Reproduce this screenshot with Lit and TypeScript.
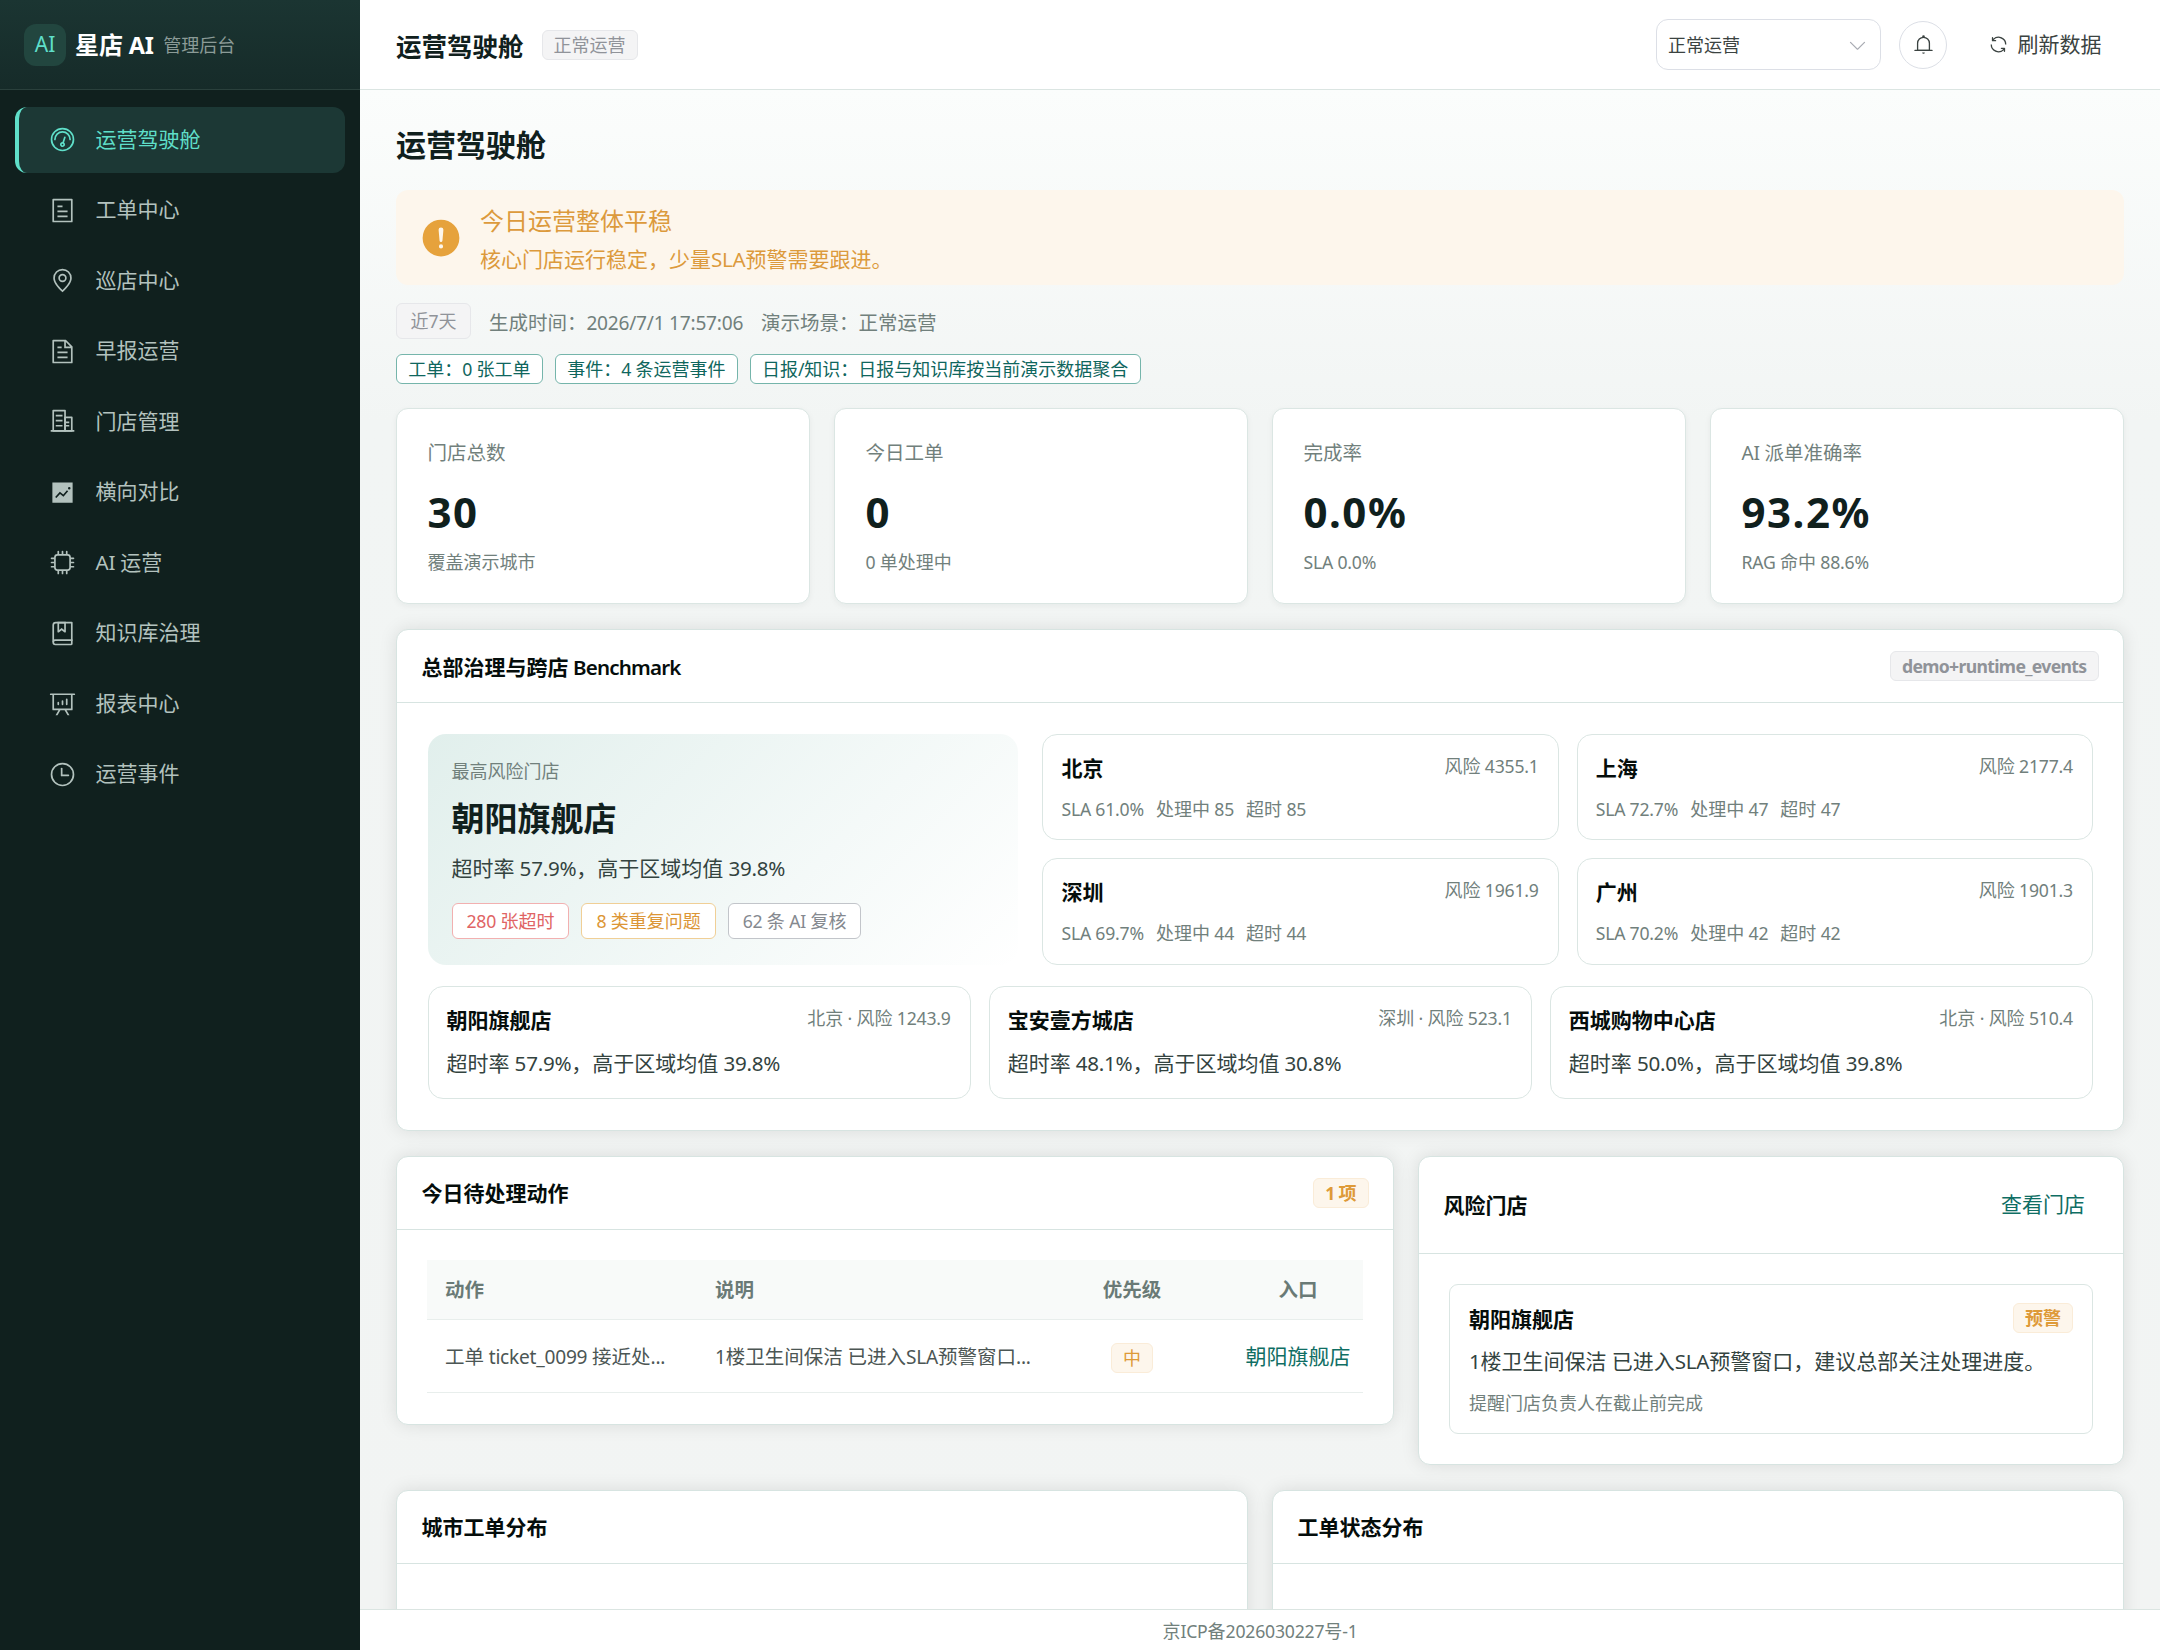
import { LitElement, html, css, svg } from "lit";
import { customElement, property } from "lit/decorators.js";

const ICONS: Record<string, string[]> = {
  odometer: [
    "M512 896a384 384 0 1 0 0-768 384 384 0 0 0 0 768m0 64a448 448 0 1 1 0-896 448 448 0 0 1 0 896",
    "M192 512a320 320 0 1 1 640 0 32 32 0 1 1-64 0 256 256 0 1 0-512 0 32 32 0 0 1-64 0",
    "M570.432 627.84A96 96 0 1 1 509.568 608l60.992-187.776A32 32 0 1 1 631.424 440l-60.992 187.776zM502.08 734.464a32 32 0 1 0 19.84-60.928 32 32 0 0 0-19.84 60.928",
  ],
  tickets: [
    "M192 128v768h640V128zm-32-64h704a32 32 0 0 1 32 32v832a32 32 0 0 1-32 32H160a32 32 0 0 1-32-32V96a32 32 0 0 1 32-32m160 448h384v64H320zm0-192h192v64H320zm0 384h384v64H320z",
  ],
  location: [
    "M800 416a288 288 0 1 0-576 0c0 118.144 94.528 272.128 288 456.576C705.472 688.128 800 534.144 800 416M512 960C277.312 746.688 160 565.312 160 416a352 352 0 0 1 704 0c0 149.312-117.312 330.688-352 544",
    "M512 512a96 96 0 1 0 0-192 96 96 0 0 0 0 192m0 64a160 160 0 1 1 0-320 160 160 0 0 1 0 320",
  ],
  document: [
    "M832 384H576V128H192v768h640zm-26.496-64L640 154.496V320zM160 64h480l256 256v608a32 32 0 0 1-32 32H160a32 32 0 0 1-32-32V96a32 32 0 0 1 32-32m160 448h384v64H320zm0-192h160v64H320zm0 384h384v64H320z",
  ],
  office: [
    "M192 128v704h384V128zm-32-64h448a32 32 0 0 1 32 32v768a32 32 0 0 1-32 32H160a32 32 0 0 1-32-32V96a32 32 0 0 1 32-32",
    "M256 256h256v64H256zm0 192h256v64H256zm0 192h256v64H256zm384-128h128v64H640zm0 128h128v64H640zM64 832h896v64H64z",
    "M640 384v448h192V384zm-32-64h256a32 32 0 0 1 32 32v512a32 32 0 0 1-32 32H608a32 32 0 0 1-32-32V352a32 32 0 0 1 32-32",
  ],
  trend: [
    "M128 896V128h768v768zm291.712-327.296 128 102.4 180.16-201.792-47.744-42.624-139.84 156.608-128-102.4-180.16 201.792 47.744 42.624 139.84-156.608zM816 352a48 48 0 1 0-96 0 48 48 0 0 0 96 0",
  ],
  cpu: [
    "M320 256a64 64 0 0 0-64 64v384a64 64 0 0 0 64 64h384a64 64 0 0 0 64-64V320a64 64 0 0 0-64-64zm0-64h384a128 128 0 0 1 128 128v384a128 128 0 0 1-128 128H320a128 128 0 0 1-128-128V320a128 128 0 0 1 128-128",
    "M512 64a32 32 0 0 1 32 32v128h-64V96a32 32 0 0 1 32-32m160 0a32 32 0 0 1 32 32v128h-64V96a32 32 0 0 1 32-32m-320 0a32 32 0 0 1 32 32v128h-64V96a32 32 0 0 1 32-32m160 896a32 32 0 0 1-32-32V800h64v128a32 32 0 0 1-32 32m160 0a32 32 0 0 1-32-32V800h64v128a32 32 0 0 1-32 32m-320 0a32 32 0 0 1-32-32V800h64v128a32 32 0 0 1-32 32M64 512a32 32 0 0 1 32-32h128v64H96a32 32 0 0 1-32-32m0-160a32 32 0 0 1 32-32h128v64H96a32 32 0 0 1-32-32m0 320a32 32 0 0 1 32-32h128v64H96a32 32 0 0 1-32-32m896-160a32 32 0 0 1-32 32H800v-64h128a32 32 0 0 1 32 32m0-160a32 32 0 0 1-32 32H800v-64h128a32 32 0 0 1 32 32m0 320a32 32 0 0 1-32 32H800v-64h128a32 32 0 0 1 32 32",
  ],
  collection: [
    "M192 736h640V128H256a64 64 0 0 0-64 64zm64-672h608a32 32 0 0 1 32 32v672a32 32 0 0 1-32 32H160l-32 57.536V192A128 128 0 0 1 256 64",
    "M240 800a48 48 0 1 0 0 96h592v-96zm0-64h656v160a64 64 0 0 1-64 64H240a112 112 0 0 1 0-224m144-608v250.88l96-76.8 96 76.8V128zm-64-64h320v381.44a32 32 0 0 1-51.968 24.96L480 384l-108.032 86.4A32 32 0 0 1 320 445.44z",
  ],
  analysis: [
    "m665.216 768 110.848 192h-73.856L591.36 768H433.024L322.176 960H248.32l110.848-192H160a32 32 0 0 1-32-32V192H64a32 32 0 0 1 0-64h896a32 32 0 1 1 0 64h-64v544a32 32 0 0 1-32 32zM832 192H192v512h640zM352 448a32 32 0 0 1 32 32v64a32 32 0 0 1-64 0v-64a32 32 0 0 1 32-32m160-64a32 32 0 0 1 32 32v128a32 32 0 0 1-64 0V416a32 32 0 0 1 32-32m160-64a32 32 0 0 1 32 32v192a32 32 0 1 1-64 0V352a32 32 0 0 1 32-32",
  ],
  clock: [
    "M512 896a384 384 0 1 0 0-768 384 384 0 0 0 0 768m0 64a448 448 0 1 1 0-896 448 448 0 0 1 0 896",
    "M480 256a32 32 0 0 1 32 32v256a32 32 0 0 1-64 0V288a32 32 0 0 1 32-32",
    "M480 512h256q32 0 32 32t-32 32H480q-32 0-32-32t32-32",
  ],
  bell: [
    "M512 64a64 64 0 0 1 64 64v64H448v-64a64 64 0 0 1 64-64",
    "M256 768h512V448a256 256 0 1 0-512 0zm256-640a320 320 0 0 1 320 320v384H192V448a320 320 0 0 1 320-320",
    "M96 768h832q32 0 32 32t-32 32H96q-32 0-32-32t32-32m352 128h128a64 64 0 0 1-128 0",
  ],
  refresh: [
    "M771.776 794.88A384 384 0 0 1 128 512h64a320 320 0 0 0 555.712 216.448H654.72a32 32 0 1 1 0-64h149.056a32 32 0 0 1 32 32v148.928a32 32 0 1 1-64 0v-50.56zM276.288 295.616h92.992a32 32 0 0 1 0 64H220.16a32 32 0 0 1-32-32V178.56a32 32 0 0 1 64 0v50.56A384 384 0 0 1 896.128 512h-64a320 320 0 0 0-555.776-216.384z",
  ],
  arrowDown: [
    "M831.872 340.864 512 652.672 192.128 340.864a30.592 30.592 0 0 0-42.752 0 29.12 29.12 0 0 0 0 41.6L489.664 714.24a32 32 0 0 0 44.672 0l340.288-331.712a29.12 29.12 0 0 0 0-41.728 30.592 30.592 0 0 0-42.752 0z",
  ],
  warning: [
    "M512 64a448 448 0 1 1 0 896 448 448 0 0 1 0-896m0 192a58.432 58.432 0 0 0-58.24 63.744l23.36 256.384a35.072 35.072 0 0 0 69.76 0l23.296-256.384A58.432 58.432 0 0 0 512 256m0 512a51.2 51.2 0 1 0 0-102.4 51.2 51.2 0 0 0 0 102.4",
  ],
};

@customElement("ui-icon")
export class UiIcon extends LitElement {
  @property() name = "";
  static styles = css`
    :host { display: inline-flex; width: 1em; height: 1em; flex: none; }
    .glyph { width: 100%; height: 100%; fill: currentColor; display: block; }
  `;
  render() {
    return html`<svg class="glyph" viewBox="0 0 1024 1024">
      ${(ICONS[this.name] ?? []).map((d) => svg`<path d=${d}></path>`)}
    </svg>`;
  }
}

/** Splits mixed text so that Latin runs get their own, slightly tighter metrics. */
const mix = (text: string) =>
  text
    .split(/([\x20-\x7e\u00b7]+)/)
    .filter((part) => part !== "")
    .map((part) => (/^[\x20-\x7e\u00b7]/.test(part) ? html`<span class="latin">${part}</span>` : part));

const MENU = [
  ["odometer", "运营驾驶舱"],
  ["tickets", "工单中心"],
  ["location", "巡店中心"],
  ["document", "早报运营"],
  ["office", "门店管理"],
  ["trend", "横向对比"],
  ["cpu", "AI 运营"],
  ["collection", "知识库治理"],
  ["analysis", "报表中心"],
  ["clock", "运营事件"],
];

const KPIS = [
  ["门店总数", "30", "覆盖演示城市"],
  ["今日工单", "0", "0 单处理中"],
  ["完成率", "0.0%", "SLA 0.0%"],
  ["AI 派单准确率", "93.2%", "RAG 命中 88.6%"],
];

const CITIES = [
  ["北京", "4355.1", "61.0%", "85"],
  ["上海", "2177.4", "72.7%", "47"],
  ["深圳", "1961.9", "69.7%", "44"],
  ["广州", "1901.3", "70.2%", "42"],
];

const STORES = [
  ["朝阳旗舰店", "北京 · 风险 1243.9", "超时率 57.9%，高于区域均值 39.8%"],
  ["宝安壹方城店", "深圳 · 风险 523.1", "超时率 48.1%，高于区域均值 30.8%"],
  ["西城购物中心店", "北京 · 风险 510.4", "超时率 50.0%，高于区域均值 39.8%"],
];

@customElement("app-root")
export class AppRoot extends LitElement {
  static styles = css`
    :host {
      display: flex;
      width: 100%;
      height: 1650px;
      overflow: hidden;
      font-family: "Noto Sans", "Noto Sans CJK SC", sans-serif;
      font-size: 21px;
      line-height: 1.4;
      color: #10201d;
      background: #f2f5f4;
    }
    * { box-sizing: border-box; }
    .latin { letter-spacing: -0.012em; font-size: 0.98em; white-space: pre; }

    .sidebar { width: 360px; flex: none; background: #10201e; display: flex; flex-direction: column; }
    .brand {
      height: 90px; flex: none; padding-left: 24px; display: flex; align-items: center;
      background: linear-gradient(180deg, #1b3532 0%, #162b29 100%);
      border-bottom: 1px solid #2a403c;
    }
    .brand-mark {
      width: 42px; height: 42px; border-radius: 12px; background: #22463f; color: #5fdfc9;
      display: flex; align-items: center; justify-content: center; margin-right: 9px;
    }
    .brand-name { font-size: 24px; font-weight: 700; color: #fff; line-height: 34px; margin-right: 9.5px; white-space: nowrap; }
    .brand-sub { font-size: 18px; color: #8b9b97; line-height: 26px; padding-top: 1px; }
    .menu { display: flex; flex-direction: column; gap: 4.5px; padding: 16.5px 15px; }
    .menu-item {
      height: 66px; display: flex; align-items: center; padding-left: 30px; gap: 19.5px;
      border-left: 4.5px solid transparent; border-radius: 12px; color: #b3c2be; font-size: 21px;
    }
    .menu-item.active { background: #1c3835; color: #5fdfc9; border-left-color: #5fdfc9; }
    .menu-icon { font-size: 27px; }

    .main { flex: 1; min-width: 0; display: flex; flex-direction: column; }
    .topbar {
      height: 90px; flex: none; background: #fff; border-bottom: 1px solid #dbe5e2;
      display: flex; align-items: center; padding: 0 36px;
    }
    .topbar-title { font-size: 25.5px; font-weight: 700; margin-right: 18px; line-height: 36px; padding-top: 2px; }
    .spacer { flex: 1; }
    .select {
      width: 225px; height: 51px; border: 1px solid #dcdfe6; border-radius: 12px; padding: 2px 12px 0 11px;
      display: flex; align-items: center; justify-content: space-between; font-size: 18px; color: #3b4341;
      margin-right: 18px;
    }
    .select-arrow { font-size: 21px; color: #a8abb2; }
    .round-btn {
      width: 48px; height: 48px; border: 1px solid #dcdfe6; border-radius: 50%;
      display: flex; align-items: center; justify-content: center; font-size: 21px; color: #3b4341;
    }
    .text-btn { display: flex; align-items: center; gap: 9px; padding: 0 22.5px; margin-left: 18px; color: #3b4341; }

    .tag {
      height: 30px; padding: 0 11px; border: 1px solid; border-radius: 6px; font-size: 18px; line-height: 28px;
      display: inline-flex; align-items: center; white-space: nowrap; flex: none;
    }
    .tag.info { background: #f4f4f5; border-color: #e6e7ea; color: #909399; }
    .tag.warn { background: #fdf6ec; border-color: #faecd8; color: #de9a38; }
    .tag.tall { height: 36px; padding: 0 13.5px; }
    .tag.teal { background: #fff; border-color: #75b5ab; color: #0f665d; }
    .tag.danger-line { background: #fff; border-color: #f2b0b0; color: #e06464; }
    .tag.warn-line { background: #fff; border-color: #f0cf96; color: #dc9636; }
    .tag.info-line { background: #fff; border-color: #c2c5ca; color: #85898f; }
    .tag.strong { font-weight: 700; }
    .tag.strong .latin { letter-spacing: -0.038em; }

    .content {
      flex: 1; min-height: 0; overflow: hidden; padding: 35px 36px 0; display: flex; flex-direction: column;
      background: linear-gradient(180deg, #fbfdfc 0, #f2f5f4 330px, #f2f4f3 100%);
    }
    .content > * { flex: none; }
    .page-title { margin: 0; height: 40px; line-height: 40px; font-size: 30px; font-weight: 700; }
    .alert {
      margin-top: 25px; height: 95px; border-radius: 12px; background: #fdf6ec; color: #dc9a3c;
      display: flex; align-items: center; padding: 0 24px; gap: 18px;
    }
    .alert-icon { font-size: 42px; color: #e6a23c; }
    .alert-title { font-size: 24px; line-height: 36px; padding-top: 2px; }
    .alert-text { font-size: 21px; line-height: 32px; margin-top: 4px; }
    .meta { margin-top: 18px; height: 36px; display: flex; align-items: center; gap: 18px; font-size: 19.5px; color: #71807c; }
    .meta-text { padding-top: 3px; }
    .chips { margin-top: 15px; display: flex; gap: 12px; }
    .chips .tag { padding: 0 11.3px; }

    .kpis { margin-top: 24px; display: grid; grid-template-columns: repeat(4, 1fr); gap: 24px; }
    .kpi {
      height: 196px; background: #fff; border: 1px solid #dbe6e3; border-radius: 12px; padding: 29px 30px 0 30.5px;
      box-shadow: 0 2px 6px rgba(16, 40, 36, 0.05);
    }
    .kpi-label { font-size: 19.5px; line-height: 30px; color: #71807c; }
    .kpi-value { font-size: 42px; line-height: 60px; font-weight: 700; margin-top: 14px; }
    .kpi-value .latin { letter-spacing: 0.036em; font-size: 1em; }
    .kpi-sub { font-size: 18px; line-height: 28px; color: #71807c; margin-top: 6px; }

    .card {
      background: #fff; border: 1px solid #d7e4e1; border-radius: 12px;
      box-shadow: 0 0 18px rgba(0, 0, 0, 0.1);
    }
    .card-head {
      height: 73px; border-bottom: 1px solid #d7e4e1; padding: 0 24.5px;
      display: flex; align-items: center; justify-content: space-between;
    }
    .card-title { font-weight: 700; font-size: 21px; color: #050d0b; line-height: 30px; }
    .card-title .latin { font-weight: 600; letter-spacing: -0.04em; }
    .bench { margin-top: 25px; height: 502px; }
    .bench .card-title { padding-top: 1px; }
    .bench-body { padding: 30.5px 30px 30px 30.5px; }
    .bench-top { display: grid; grid-template-columns: 0.9fr 1.6fr; gap: 24px; height: 231px; }
    .hero {
      border-radius: 18px; padding: 23px 24px; display: flex; flex-direction: column; align-items: flex-start;
      background: linear-gradient(135deg, #e1efec 0%, #ffffff 100%);
    }
    .hero-label { font-size: 18px; line-height: 28px; color: #71807c; }
    .hero-name { font-size: 33px; line-height: 48px; font-weight: 700; margin-top: 10px; }
    .body-text { font-size: 21px; line-height: 32px; color: #33433f; }
    .hero .body-text { margin-top: 9px; }
    .hero-tags { display: flex; gap: 12px; margin-top: 19px; }
    .hero-tags .tag { padding: 0 14px; }
    .cities { display: grid; grid-template-columns: 1fr 1fr; grid-template-rows: 1fr 1fr; gap: 18px; }
    .mini { border: 1px solid #dbe6e3; border-radius: 15px; padding: 15px 19px 15px 18px; background: #fff; }
    .mini-head { display: flex; justify-content: space-between; align-items: flex-start; }
    .mini-name { font-weight: 700; font-size: 21px; line-height: 36px; height: 36px; color: #050d0b; }
    .mini-risk { font-size: 18px; line-height: 32px; color: #71807c; }
    .mini-stats { display: flex; gap: 12px; font-size: 18px; line-height: 28px; margin-top: 9px; color: #71807c; }
    .stores { display: grid; grid-template-columns: repeat(3, 1fr); gap: 18px; margin-top: 21px; }
    .stores .mini { height: 113px; }
    .stores .body-text { margin-top: 9px; }

    .row { display: flex; gap: 24px; align-items: flex-start; margin-top: 25px; }
    .todo { width: 998px; height: 269px; }
    .risk { flex: 1; height: 309px; }
    .table { margin: 30px 30px 0; }
    .tr { display: grid; grid-template-columns: 270px 334px 202px 1fr; align-items: center; font-size: 19.5px; }
    .tr > div { padding-left: 18px; white-space: nowrap; }
    .tr > .center { padding: 0; display: flex; justify-content: center; }
    .th { height: 60px; background: #f8faf9; border-bottom: 1px solid #e8eeec; font-weight: 600; color: #6a7a76; }
    .td { height: 73px; border-bottom: 1px solid #e8eeec; color: #4c5654; padding-top: 2px; }
    .td .tag { margin-top: 2px; }
    .link { color: #0f6e64; font-size: 21px; line-height: 30px; margin-top: -3px; }
    .risk .card-head { height: 97px; }
    .risk .link { padding-right: 13.5px; }
    .risk-item {
      margin: 30px; height: 150px; border: 1px solid #dbe6e3; border-radius: 9px; padding: 18px 19px 0 19px;
    }
    .risk-item .mini-head { height: 33px; }
    .risk-item .mini-name { margin-top: -2px; }
    .risk-item .body-text { margin-top: 9px; }
    .risk-sub { font-size: 18px; line-height: 28px; margin-top: 12px; color: #71807c; }
    .charts { display: grid; grid-template-columns: 1fr 1fr; gap: 24px; margin-top: 25px; }
    .chart { height: 420px; }
    .footer {
      height: 41px; flex: none; background: #fff; border-top: 1px solid #dbe5e2; color: #71807c; font-size: 18px;
      display: flex; align-items: center; justify-content: center; padding-top: 3px;
    }
  `;

  private renderSidebar() {
    return html`<aside class="sidebar">
      <div class="brand">
        <div class="brand-mark">AI</div>
        <div class="brand-name">${mix("星店 AI")}</div>
        <div class="brand-sub">管理后台</div>
      </div>
      <nav class="menu">
        ${MENU.map(
          ([icon, label], i) => html`<div class="menu-item ${i === 0 ? "active" : ""}">
            <ui-icon class="menu-icon" name=${icon}></ui-icon><span>${mix(label)}</span>
          </div>`
        )}
      </nav>
    </aside>`;
  }

  private renderTopbar() {
    return html`<header class="topbar">
      <div class="topbar-title">运营驾驶舱</div>
      <span class="tag info">正常运营</span>
      <div class="spacer"></div>
      <div class="select"><span>正常运营</span><ui-icon class="select-arrow" name="arrowDown"></ui-icon></div>
      <div class="round-btn"><ui-icon name="bell"></ui-icon></div>
      <div class="text-btn"><ui-icon name="refresh"></ui-icon><span>刷新数据</span></div>
    </header>`;
  }

  private renderBenchmark() {
    return html`<section class="card bench">
      <div class="card-head">
        <div class="card-title">${mix("总部治理与跨店 Benchmark")}</div>
        <span class="tag info strong"><span>${mix("demo+runtime_events")}</span></span>
      </div>
      <div class="bench-body">
        <div class="bench-top">
          <div class="hero">
            <div class="hero-label">最高风险门店</div>
            <div class="hero-name">朝阳旗舰店</div>
            <div class="body-text">${mix("超时率 57.9%，高于区域均值 39.8%")}</div>
            <div class="hero-tags">
              <span class="tag tall danger-line"><span>${mix("280 张超时")}</span></span>
              <span class="tag tall warn-line"><span>${mix("8 类重复问题")}</span></span>
              <span class="tag tall info-line"><span>${mix("62 条 AI 复核")}</span></span>
            </div>
          </div>
          <div class="cities">
            ${CITIES.map(
              ([name, risk, sla, count]) => html`<div class="mini">
                <div class="mini-head">
                  <div class="mini-name">${name}</div>
                  <div class="mini-risk">${mix("风险 " + risk)}</div>
                </div>
                <div class="mini-stats">
                  <span>${mix("SLA " + sla)}</span><span>${mix("处理中 " + count)}</span><span>${mix("超时 " + count)}</span>
                </div>
              </div>`
            )}
          </div>
        </div>
        <div class="stores">
          ${STORES.map(
            ([name, risk, text]) => html`<div class="mini">
              <div class="mini-head">
                <div class="mini-name">${name}</div>
                <div class="mini-risk">${mix(risk)}</div>
              </div>
              <div class="body-text">${mix(text)}</div>
            </div>`
          )}
        </div>
      </div>
    </section>`;
  }

  private renderActions() {
    return html`<div class="row">
      <section class="card todo">
        <div class="card-head">
          <div class="card-title">今日待处理动作</div>
          <span class="tag warn strong"><span>${mix("1 项")}</span></span>
        </div>
        <div class="table">
          <div class="tr th">
            <div>动作</div><div>说明</div><div class="center">优先级</div><div class="center">入口</div>
          </div>
          <div class="tr td">
            <div>${mix("工单 ticket_0099 接近处...")}</div>
            <div>${mix("1楼卫生间保洁 已进入SLA预警窗口...")}</div>
            <div class="center"><span class="tag warn">中</span></div>
            <div class="center"><span class="link">朝阳旗舰店</span></div>
          </div>
        </div>
      </section>
      <section class="card risk">
        <div class="card-head">
          <div class="card-title">风险门店</div>
          <span class="link">查看门店</span>
        </div>
        <div class="risk-item">
          <div class="mini-head">
            <div class="mini-name">朝阳旗舰店</div>
            <span class="tag warn strong">预警</span>
          </div>
          <div class="body-text">${mix("1楼卫生间保洁 已进入SLA预警窗口，建议总部关注处理进度。")}</div>
          <div class="risk-sub">提醒门店负责人在截止前完成</div>
        </div>
      </section>
    </div>`;
  }

  render() {
    return html`${this.renderSidebar()}
      <div class="main">
        ${this.renderTopbar()}
        <main class="content">
          <h1 class="page-title">运营驾驶舱</h1>
          <div class="alert">
            <ui-icon class="alert-icon" name="warning"></ui-icon>
            <div>
              <div class="alert-title">今日运营整体平稳</div>
              <div class="alert-text">${mix("核心门店运行稳定，少量SLA预警需要跟进。")}</div>
            </div>
          </div>
          <div class="meta">
            <span class="tag tall info"><span>${mix("近7天")}</span></span>
            <span class="meta-text">${mix("生成时间：2026/7/1 17:57:06")}</span>
            <span class="meta-text">演示场景：正常运营</span>
          </div>
          <div class="chips">
            <span class="tag teal"><span>${mix("工单：0 张工单")}</span></span>
            <span class="tag teal"><span>${mix("事件：4 条运营事件")}</span></span>
            <span class="tag teal"><span>${mix("日报/知识：日报与知识库按当前演示数据聚合")}</span></span>
          </div>
          <div class="kpis">
            ${KPIS.map(
              ([label, value, sub]) => html`<div class="kpi">
                <div class="kpi-label">${mix(label)}</div>
                <div class="kpi-value">${mix(value)}</div>
                <div class="kpi-sub">${mix(sub)}</div>
              </div>`
            )}
          </div>
          ${this.renderBenchmark()} ${this.renderActions()}
          <div class="charts">
            <section class="card chart"><div class="card-head"><div class="card-title">城市工单分布</div></div></section>
            <section class="card chart"><div class="card-head"><div class="card-title">工单状态分布</div></div></section>
          </div>
        </main>
        <footer class="footer"><span>${mix("京ICP备2026030227号-1")}</span></footer>
      </div>`;
  }
}
